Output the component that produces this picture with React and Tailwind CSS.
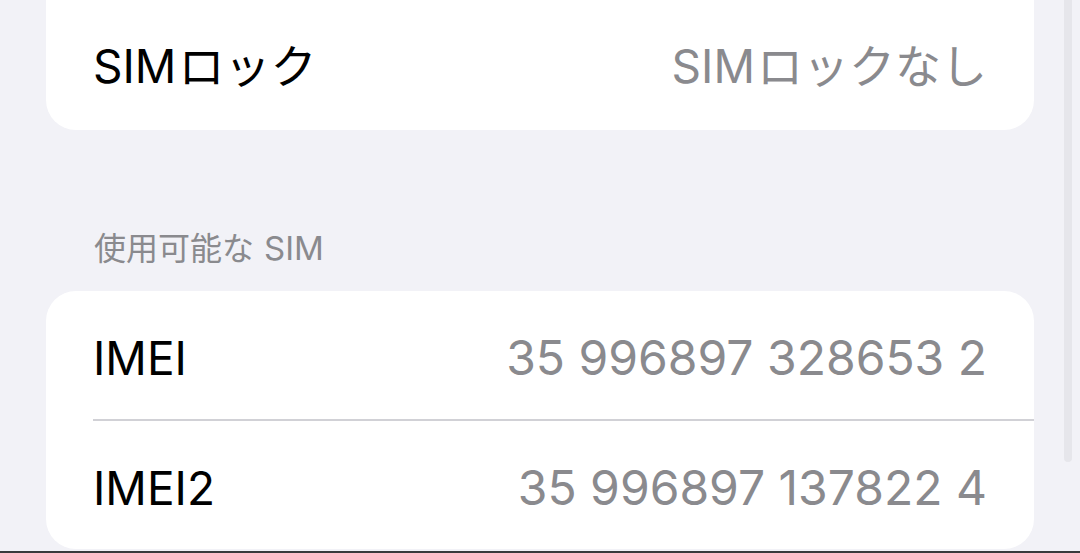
import React from "react";

const rows = [
  { label: "IMEI", value: "35 996897 328653 2" },
  { label: "IMEI2", value: "35 996897 137822 4" },
];

const App = () => {
  return (
    <div
      className="relative h-[553px] w-[1080px] overflow-hidden bg-[#f2f2f7]"
      style={{ fontFamily: '"Inter", "Noto Sans CJK JP", sans-serif' }}
    >
      {/* top card, cut off at the top of the screen */}
      <div className="ml-[46px] mr-[46px] flex h-[130px] items-center justify-between rounded-b-[30px] bg-white px-[47px] pt-[2px]">
        <span className="text-[46px] text-black">
          SIM<span className="ml-[2px]">ロック</span>
        </span>
        <span className="text-[46px] text-[#8a8a8e]">
          SIM<span className="ml-[2px]">ロックなし</span>
        </span>
      </div>

      <div className="px-[94px] pt-[99px] pb-[23px] text-[32px] leading-[38px] text-[#8a8a8e]">
        使用可能な<span className="ml-[10px] text-[33px]">SIM</span>
      </div>

      <div className="mx-[46px] overflow-hidden rounded-[30px] bg-white">
        {rows.map((row, i) => (
          <div key={row.label} className="pl-[47px]">
            {i > 0 && <div className="h-[2px] bg-[#d1d1d6]" />}
            <div className="flex h-[128px] items-center justify-between pt-[6px] pr-[47px]">
              <span className="text-[46px] text-black">{row.label}</span>
              <span className="text-[48px] text-[#8a8a8e]">{row.value}</span>
            </div>
          </div>
        ))}
      </div>

      {/* scroll indicator */}
      <div className="absolute top-0 right-[8px] h-[462px] w-[8px] rounded-b-full bg-[#e6e6eb]" />

      <div className="absolute right-0 bottom-0 left-0 h-[2px] bg-[#3a3a3c]" />
    </div>
  );
};

export default App;
